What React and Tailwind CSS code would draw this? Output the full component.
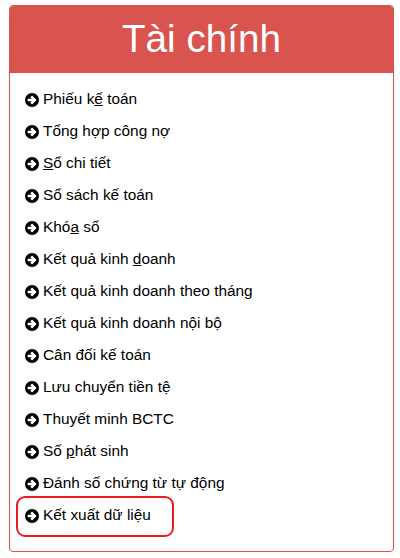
const items = [
  [['Phiếu k'], ['ế', true], [' toán']],
  [['Tổng hợp công nợ']],
  [['S', true], ['ổ chi tiết']],
  [['Sổ sách kế toán']],
  [['Khó'], ['a', true], [' sổ']],
  [['Kết quả kinh '], ['d', true], ['oanh']],
  [['Kết quả kinh doanh theo tháng']],
  [['Kết quả kinh doanh nội bộ']],
  [['Cân đối kế toán']],
  [['Lưu chuyển tiền tệ']],
  [['Thuyết minh BCTC']],
  [['Số '], ['p', true], ['hát sinh']],
  [['Đánh số chứng từ tự động']],
  [['Kết xuất dữ liệu']],
];

function ArrowIcon() {
  return (
    <svg width="14" height="14" viewBox="0 0 14 14" className="mb-[1px] shrink-0">
      <circle cx="7" cy="7" r="7" fill="#000" />
      <path d="M2.6 7h6.4M6.2 3.4 9.8 7l-3.6 3.6" fill="none" stroke="#fff" strokeWidth="2.6" />
    </svg>
  );
}

export default function App() {
  return (
    <div className="h-[558px] w-[400px] bg-white pt-[5px] pl-[9px] font-['Liberation_Sans',Arial,sans-serif]">
      <div className="relative h-[547px] w-[385px] overflow-hidden rounded-[4px] border border-[#d9534f]">
        <div className="flex h-[67px] items-center justify-center bg-[#d9534f] text-[38.7px] text-white">
          Tài chính
        </div>
        <ul className="pt-[11px] pl-[15px]">
          {items.map((parts, i) => (
            <li key={i} className="flex h-8 items-center gap-[4px] text-[15.4px] text-black">
              <ArrowIcon />
              <span className="whitespace-pre pb-[2px]">
                {parts.map(([text, underline], j) => (
                  <span key={j} className={underline ? 'underline' : ''}>{text}</span>
                ))}
              </span>
            </li>
          ))}
        </ul>
        <div className="absolute top-[490px] left-[6px] h-[41px] w-[158px] rounded-[9px] border-2 border-[#ed1c24]" />
      </div>
    </div>
  );
}
